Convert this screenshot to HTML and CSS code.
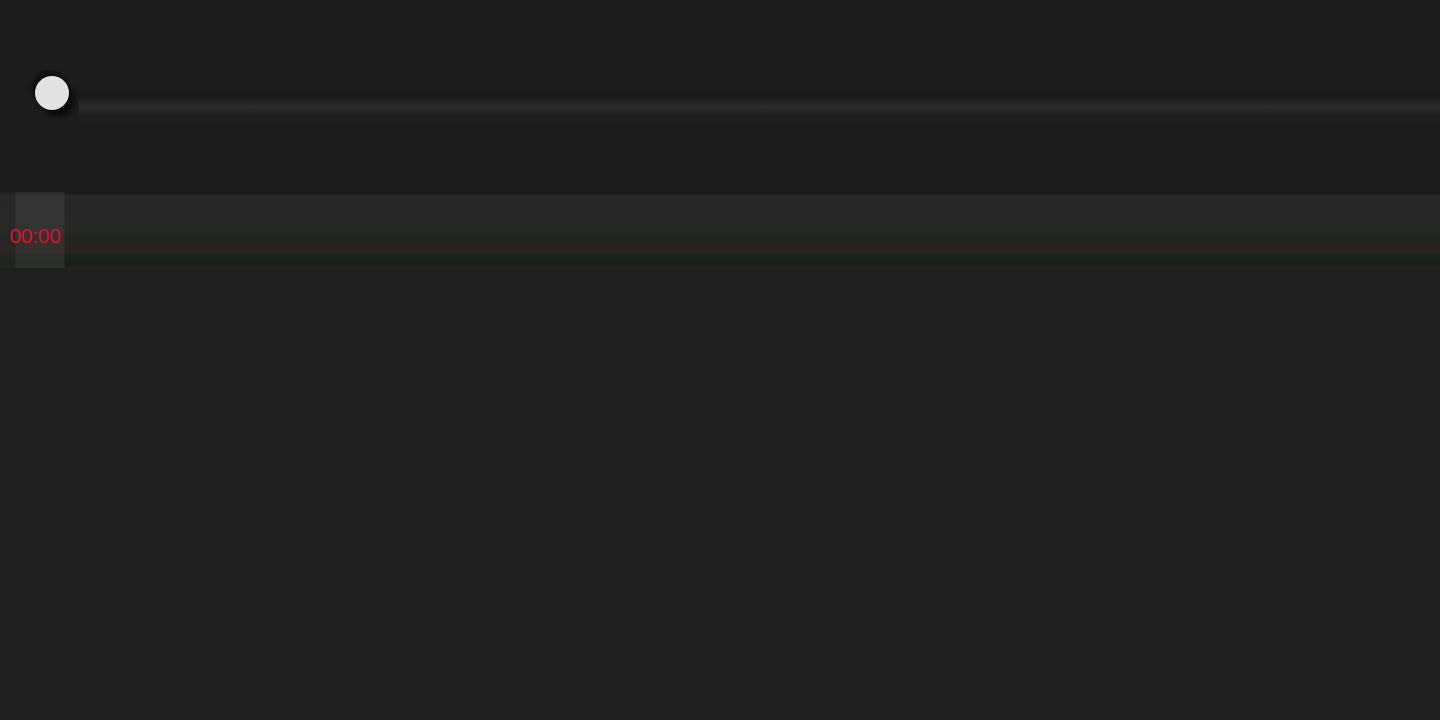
FILE: index.html
```html
<!DOCTYPE html>
<html lang="en">
<head>
    <meta charset="UTF-8">
    <meta name="viewport" content="width=device-width, initial-scale=1.0">
    <title>Player</title>
    <link rel="stylesheet" href="styles.css">
</head>
<body>

<div class="page">
    <!-- Header with avatar and progress track -->
    <div class="header">
        <div class="avatar"></div>
        <div class="track"></div>
    </div>

    <!-- Timer strip -->
    <div class="timer-row">
        <div class="timer-box">
            <span id="timer">00:00</span>
        </div>
        <div class="strip"></div>
    </div>
</div>

</body>
</html>
```

FILE: styles.css
```css
/* Body styling */
body {
    margin: 0;
    background-color: #202020;
    font-family: 'Liberation Sans', Arial, sans-serif;
    height: 100vh;
    overflow: hidden;
}

.page {
    display: flex;
    flex-direction: column;
}

/* Header */
.header {
    background: #1d1d1d;
    height: 192px;
    display: flex;
    align-items: flex-start;
    padding-top: 76px;
    padding-left: 35px;
    box-sizing: border-box;
}

.avatar {
    width: 34px;
    height: 34px;
    border-radius: 50%;
    background: #e2e2e2;
    box-shadow: -3px -5px 5px rgba(0, 0, 0, 0.5), 6px 7px 6px rgba(0, 0, 0, 0.65);
    flex-shrink: 0;
}

.track {
    flex: 1;
    height: 34px;
    margin-top: 12px;
    margin-left: 10px;
    background: linear-gradient(to bottom, #1d1d1d 0%, #191919 20%, #222222 38%, #2b2b2b 55%, #252525 70%, #1f1f1f 85%, #1e1e1e 100%);
}

/* Timer strip */
.timer-row {
    display: flex;
    height: 76px;
    background: linear-gradient(to bottom,
        #1a1a1a 0px, #2a2a2a 5px, #262626 10px, #272727 38px,
        #1f2720 44px, #28231f 50px, #29241f 60px,
        #1a211b 66px, #1b1f1b 72px, #202020 76px);
}

.timer-box {
    width: 70px;
    display: flex;
    align-items: center;
    justify-content: center;
    padding-top: 12px;
    box-sizing: border-box;
    background: linear-gradient(to right, rgba(40, 40, 40, 0.5) 0px, rgba(40, 40, 40, 0.5) 15px, rgba(80, 80, 80, 0.3) 16px, rgba(80, 80, 80, 0.3) 64px, transparent 65px);
    flex-shrink: 0;
}

#timer {
    color: #d8102c;
    font-size: 21px;
    letter-spacing: -0.3px;
}

.strip {
    flex: 1;
}
```
